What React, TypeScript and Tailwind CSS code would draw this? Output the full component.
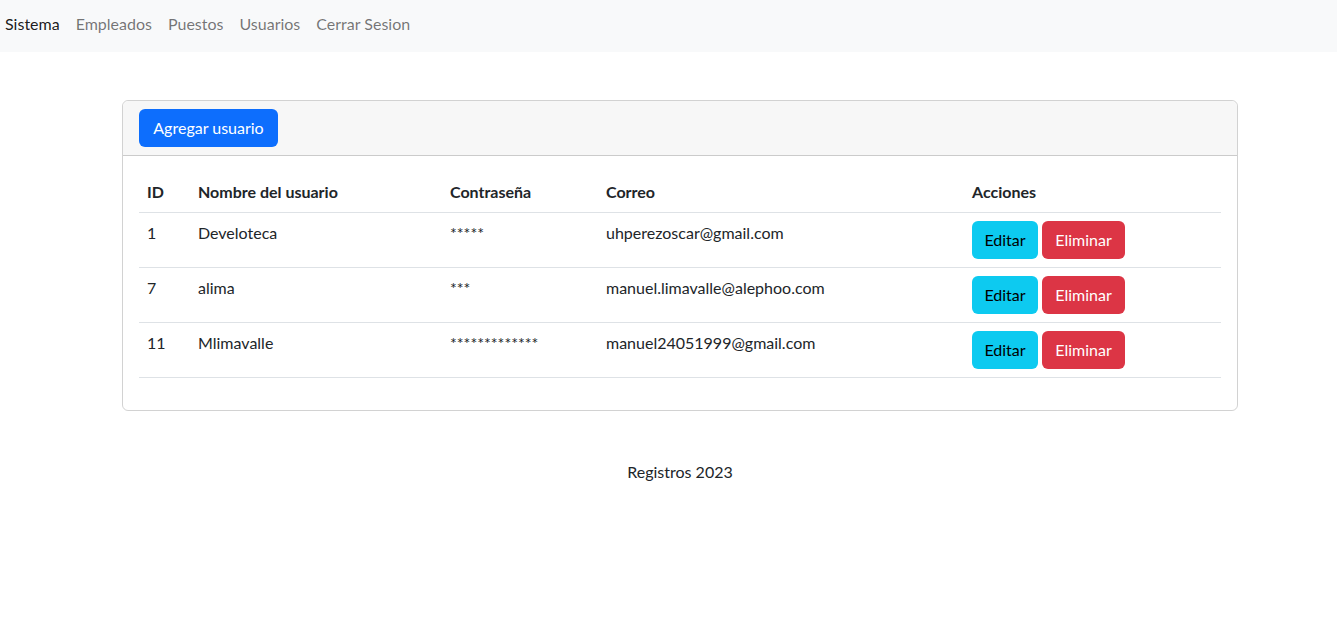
const users = [
  { id: 1, name: "Develoteca", pass: "*****", email: "uhperezoscar@gmail.com" },
  { id: 7, name: "alima", pass: "***", email: "manuel.limavalle@alephoo.com" },
  { id: 11, name: "Mlimavalle", pass: "*************", email: "manuel24051999@gmail.com" },
];

const links = ["Empleados", "Puestos", "Usuarios", "Cerrar Sesion"];

export default function App() {
  return (
    <div className="min-h-[634px] bg-white font-['Lato','Noto_Sans',sans-serif] text-base text-[#212529]">
      {/* Navbar */}
      <nav className="flex h-[52px] items-center bg-[#f8f9fa] pb-1 pl-[5px]">
        <a className="mr-4 leading-6 text-[rgba(0,0,0,0.9)]">Sistema</a>
        <div className="flex gap-4">
          {links.map((l) => (
            <a key={l} className="leading-6 text-[rgba(0,0,0,0.55)]">
              {l}
            </a>
          ))}
        </div>
      </nav>

      {/* Card */}
      <div className="ml-[122px] mt-12 w-[1116px] rounded-md border border-[rgba(0,0,0,0.175)]">
        <div className="rounded-t-md border-b border-[rgba(0,0,0,0.175)] bg-[#f7f7f7] px-4 py-2">
          <button className="h-[38px] w-[139px] rounded-md bg-[#0d6efd] leading-6 text-white">
            Agregar usuario
          </button>
        </div>
        <div className="p-4">
          <table className="mb-4 w-full border-collapse text-left">
            <thead>
              <tr className="border-b border-[#dee2e6]">
                <th className="w-[51px] p-2 font-bold leading-6">ID</th>
                <th className="w-[252px] p-2 font-bold leading-6">Nombre del usuario</th>
                <th className="w-[156px] p-2 font-bold leading-6">Contraseña</th>
                <th className="w-[366px] p-2 font-bold leading-6">Correo</th>
                <th className="p-2 font-bold leading-6">Acciones</th>
              </tr>
            </thead>
            <tbody>
              {users.map((u) => (
                <tr key={u.id} className="border-b border-[#dee2e6]">
                  <td className="p-2 align-top leading-6">{u.id}</td>
                  <td className="p-2 align-top leading-6">{u.name}</td>
                  <td className="p-2 align-top leading-6">{u.pass}</td>
                  <td className="p-2 align-top leading-6">{u.email}</td>
                  <td className="p-2 align-top">
                    <div className="flex gap-1">
                      <button className="h-[38px] w-[66px] rounded-md bg-[#0dcaf0] leading-6 text-black">
                        Editar
                      </button>
                      <button className="h-[38px] w-[83px] rounded-md bg-[#dc3545] leading-6 text-white">
                        Eliminar
                      </button>
                    </div>
                  </td>
                </tr>
              ))}
            </tbody>
          </table>
        </div>
      </div>

      {/* Footer */}
      <p className="ml-[122px] mt-[49px] w-[1116px] text-center leading-6">Registros 2023</p>
    </div>
  );
}
